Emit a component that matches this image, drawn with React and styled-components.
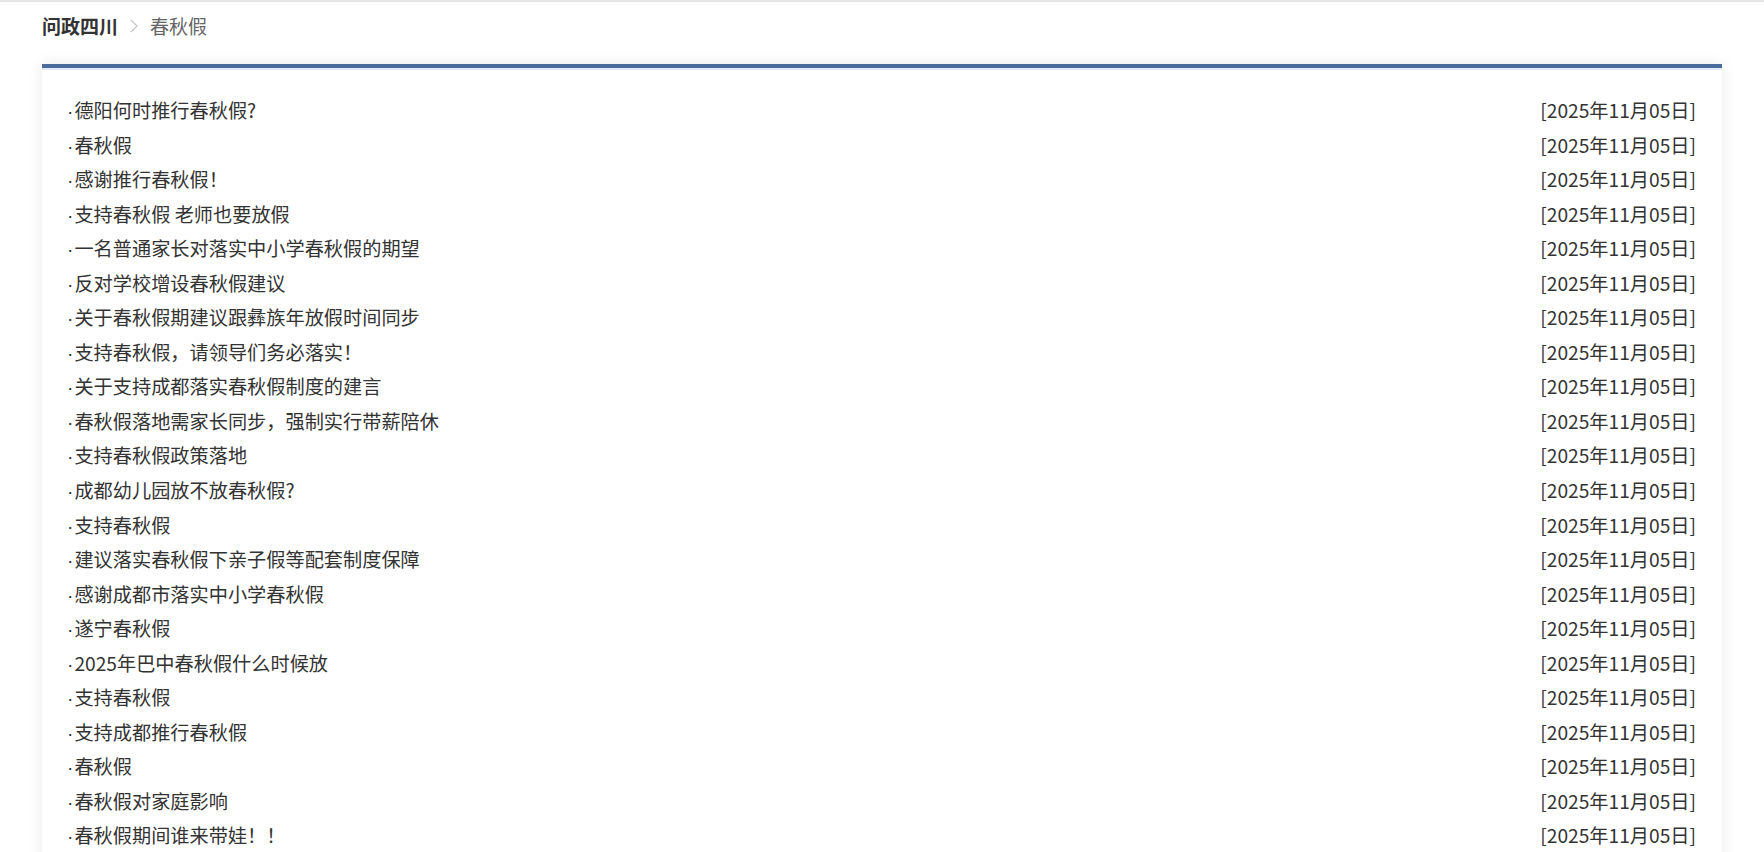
import React from "react";
import styled, { createGlobalStyle } from "styled-components";

const GlobalStyle = createGlobalStyle`
  html, body { margin: 0; padding: 0; background: #fff; }
  body { font-family: "Noto Sans CJK SC", "Microsoft YaHei", "Noto Sans", sans-serif; color: #333; }
`;

const TopLine = styled.div`
  height: 2px;
  background: #e6e6e6;
`;

const Page = styled.div`
  padding: 0 42px;
`;

const Breadcrumb = styled.nav`
  height: 62px;
  display: flex;
  align-items: flex-start;
  padding-top: 11px;
  box-sizing: border-box;
  font-size: 19px;
  line-height: 26px;
  gap: 12px;
`;

const Crumb = styled.span`
  color: ${(p) => (p.$current ? "#666" : "#333")};
  font-weight: ${(p) => (p.$current ? 400 : 700)};
`;

const Sep = styled.svg`
  width: 8px;
  height: 14px;
  margin-top: 6px;
`;

const Card = styled.section`
  border-top: 4px solid #4a6b9b;
  background: #fff;
  box-shadow: inset 0 2px 0 #e1eaf6, 0 0 14px rgba(0, 0, 0, 0.09);
  padding: 25px 26px 30px 25px;
`;

const List = styled.ul`
  list-style: none;
  margin: 0;
  padding: 0;
`;

const Row = styled.li`
  display: flex;
  justify-content: space-between;
  align-items: center;
  height: 34.56px;
  font-size: 19.2px;
  line-height: 34.56px;
  color: #333;
`;

const Title = styled.a`
  color: #333;
  text-decoration: none;
  &::before {
    content: "·";
    font-family: "Liberation Sans", Arial, sans-serif;
    line-height: 0;
    margin-right: 1px;
  }
`;

const DateText = styled.span`
  color: #333;
`;

const items = [
  "德阳何时推行春秋假?",
  "春秋假",
  "感谢推行春秋假！",
  "支持春秋假 老师也要放假",
  "一名普通家长对落实中小学春秋假的期望",
  "反对学校增设春秋假建议",
  "关于春秋假期建议跟彝族年放假时间同步",
  "支持春秋假，请领导们务必落实！",
  "关于支持成都落实春秋假制度的建言",
  "春秋假落地需家长同步，强制实行带薪陪休",
  "支持春秋假政策落地",
  "成都幼儿园放不放春秋假?",
  "支持春秋假",
  "建议落实春秋假下亲子假等配套制度保障",
  "感谢成都市落实中小学春秋假",
  "遂宁春秋假",
  "2025年巴中春秋假什么时候放",
  "支持春秋假",
  "支持成都推行春秋假",
  "春秋假",
  "春秋假对家庭影响",
  "春秋假期间谁来带娃！！",
];

export default function App() {
  return (
    <>
      <GlobalStyle />
      <TopLine />
      <Page>
        <Breadcrumb>
          <Crumb>问政四川</Crumb>
          <Sep viewBox="0 0 8 14">
            <path d="M1 1 L7 7 L1 13" fill="none" stroke="#c4c4c4" strokeWidth="1.2" />
          </Sep>
          <Crumb $current>春秋假</Crumb>
        </Breadcrumb>
        <Card>
          <List>
            {items.map((t, i) => (
              <Row key={i}>
                <Title href="#">{t}</Title>
                <DateText>[2025年11月05日]</DateText>
              </Row>
            ))}
          </List>
        </Card>
      </Page>
    </>
  );
}
